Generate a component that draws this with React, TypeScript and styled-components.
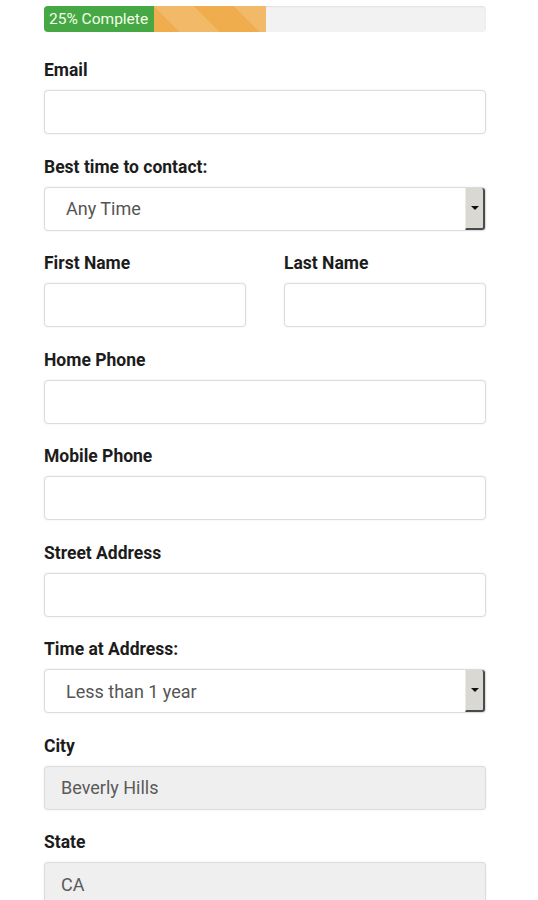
import React from 'react';
import styled, { createGlobalStyle } from 'styled-components';

const GlobalStyle = createGlobalStyle`
  body {
    margin: 0;
    background: #ffffff;
    font-family: Roboto, 'Liberation Sans', Arial, sans-serif;
  }
`;

const Page = styled.div`
  width: 442px;
  padding: 6px 0 0 44px;
`;

const Progress = styled.div`
  display: flex;
  height: 26px;
  border-radius: 4px;
  overflow: hidden;
  background: #f2f2f2;
  box-shadow: inset 0 1px 2px rgba(0, 0, 0, 0.08);
  margin-bottom: 28px;
`;

const Segment = styled.div<{ $color: string; $striped?: boolean }>`
  display: flex;
  align-items: center;
  background-color: ${(p) => p.$color};
  background-image: ${(p) =>
    p.$striped
      ? `linear-gradient(45deg, rgba(255,255,255,0.15) 25%, transparent 25%, transparent 50%, rgba(255,255,255,0.15) 50%, rgba(255,255,255,0.15) 75%, transparent 75%, transparent)`
      : 'none'};
  background-size: 80px 80px;
  color: #f4ffe8;
  font-size: 15.5px;
  padding-left: 5px;
  box-sizing: border-box;
`;

const Form = styled.div`
  display: flex;
  flex-direction: column;
  gap: 22.5px;
`;

const Row = styled.div`
  display: flex;
  gap: 38px;
`;

const Field = styled.div`
  display: flex;
  flex-direction: column;
  flex: 1;
`;

const Label = styled.label`
  font-size: 17.5px;
  line-height: 20px;
  font-weight: 700;
  color: #1c1c1c;
  margin-bottom: 10px;
  padding-top: 1px;
  margin-top: -1px;
`;

const Input = styled.input<{ $disabled?: boolean }>`
  box-sizing: border-box;
  width: 100%;
  height: 44px;
  border: 1px solid #dcdcdc;
  border-radius: 4px;
  box-shadow: 0 0 2px rgba(0, 0, 0, 0.1);
  background: ${(p) => (p.$disabled ? '#efefef' : '#ffffff')};
  padding: 0 16px;
  font-family: Roboto, 'Liberation Sans', Arial, sans-serif;
  font-size: 18px;
  color: #5a5a5a;
  outline: none;
`;

const SelectWrap = styled.div`
  position: relative;
  height: 44px;
`;

const Select = styled.select`
  appearance: none;
  box-sizing: border-box;
  width: 100%;
  height: 44px;
  border: 1px solid #dcdcdc;
  border-radius: 4px;
  box-shadow: 0 0 2px rgba(0, 0, 0, 0.1);
  background: #ffffff;
  padding: 0 21px;
  font-family: Roboto, 'Liberation Sans', Arial, sans-serif;
  font-size: 18px;
  color: #555555;
  outline: none;
`;

const DropButton = styled.span`
  position: absolute;
  top: 1px;
  right: 1px;
  bottom: 1px;
  width: 20px;
  background: #dad8d2;
  border-left: 1px solid #ebe9e4;
  border-right: 2px solid #4a4a4a;
  border-bottom: 2px solid #4a4a4a;
  border-radius: 0 3px 3px 0;
  display: flex;
  align-items: center;
  justify-content: center;
  box-sizing: border-box;
`;

const Arrow = styled.span`
  width: 0;
  height: 0;
  border-left: 4px solid transparent;
  border-right: 4px solid transparent;
  border-top: 4px solid #111;
`;

function DropSelect({ value }: { value: string }) {
  return (
    <SelectWrap>
      <Select defaultValue={value}>
        <option>{value}</option>
      </Select>
      <DropButton>
        <Arrow />
      </DropButton>
    </SelectWrap>
  );
}

export default function App() {
  return (
    <Page>
      <GlobalStyle />
      <Progress>
        <Segment $color="#45a845" style={{ width: 110 }}>
          25% Complete
        </Segment>
        <Segment $color="#f0ad4e" $striped style={{ width: 112 }} />
      </Progress>
      <Form>
        <Field>
          <Label>Email</Label>
          <Input />
        </Field>
        <Field>
          <Label>Best time to contact:</Label>
          <DropSelect value="Any Time" />
        </Field>
        <Row>
          <Field>
            <Label>First Name</Label>
            <Input />
          </Field>
          <Field>
            <Label>Last Name</Label>
            <Input />
          </Field>
        </Row>
        <Field>
          <Label>Home Phone</Label>
          <Input />
        </Field>
        <Field>
          <Label>Mobile Phone</Label>
          <Input />
        </Field>
        <Field>
          <Label>Street Address</Label>
          <Input />
        </Field>
        <Field>
          <Label>Time at Address:</Label>
          <DropSelect value="Less than 1 year" />
        </Field>
        <Field>
          <Label>City</Label>
          <Input $disabled defaultValue="Beverly Hills" />
        </Field>
        <Field>
          <Label>State</Label>
          <Input $disabled defaultValue="CA" />
        </Field>
      </Form>
    </Page>
  );
}
